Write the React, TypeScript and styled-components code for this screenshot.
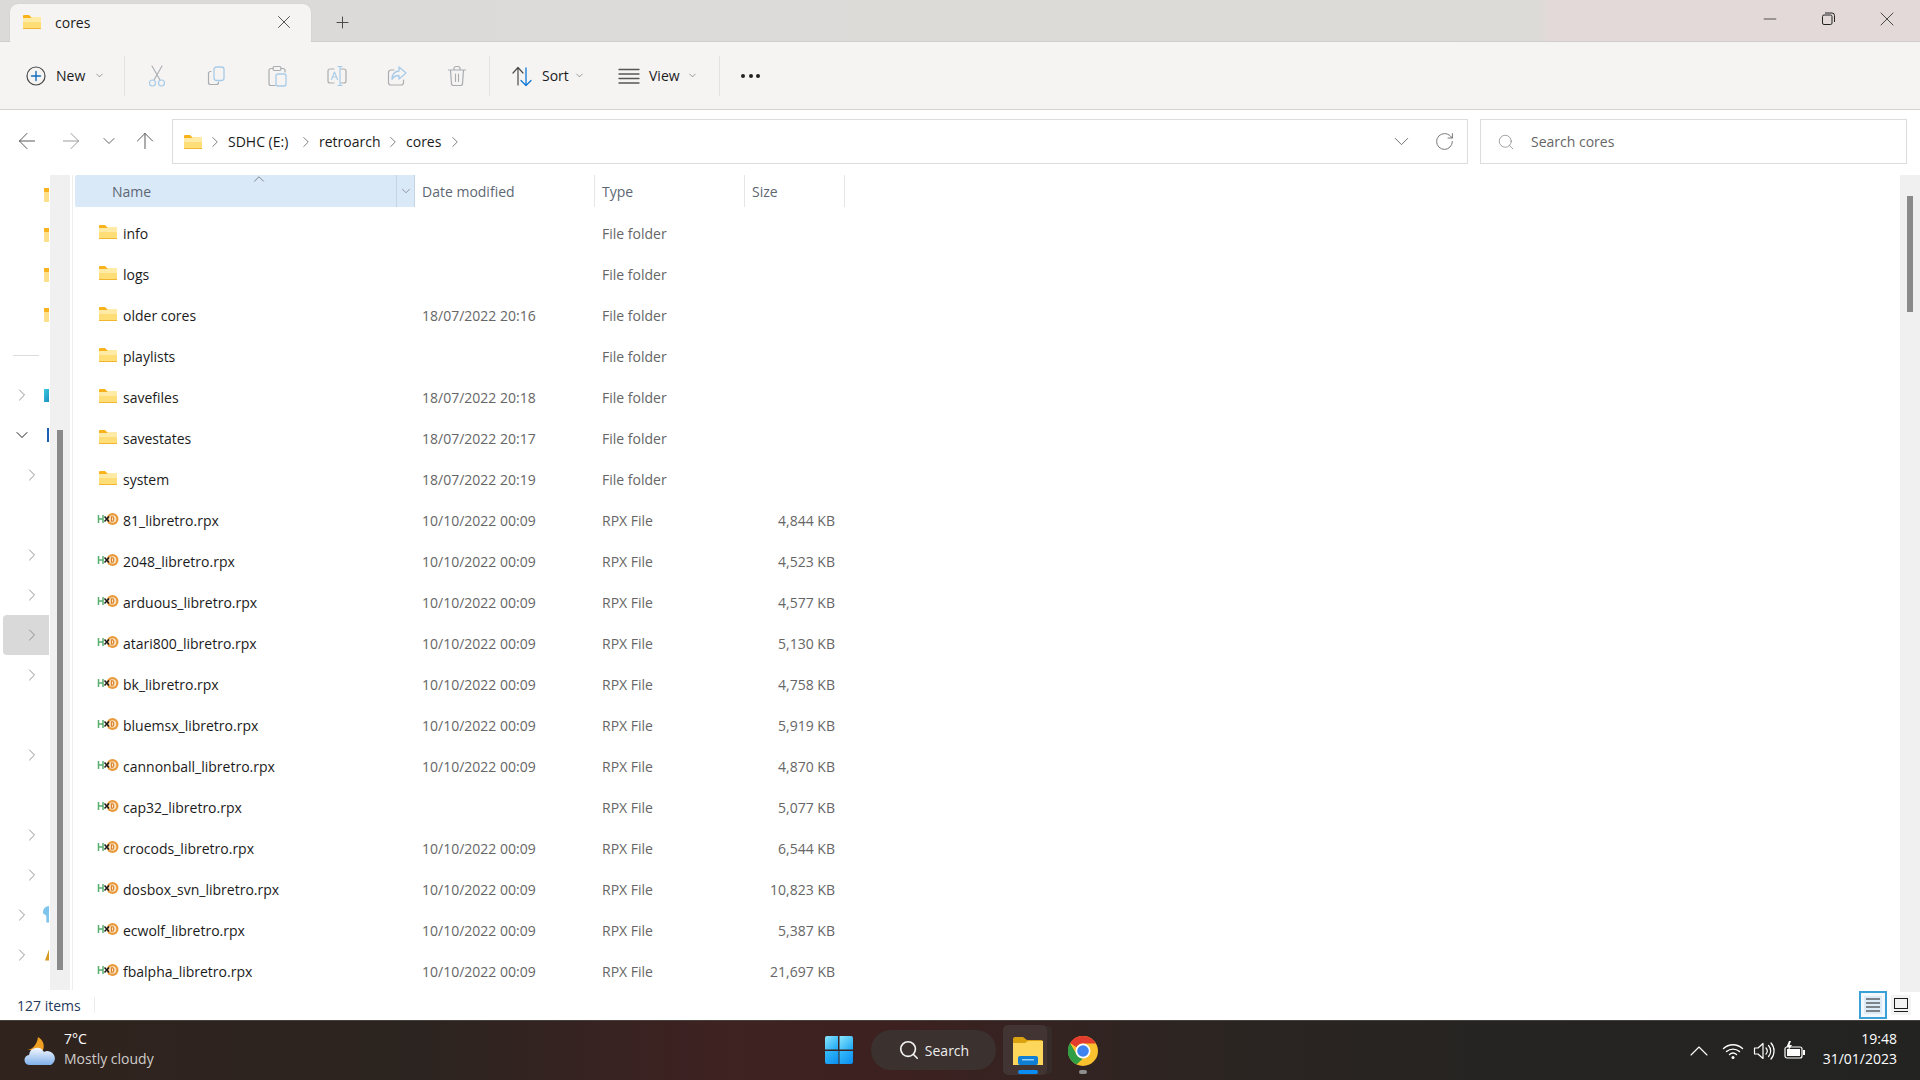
import * as React from "react";
import styled, { createGlobalStyle } from "styled-components";
import {
  ArrowLeft,
  ArrowRight,
  ArrowUp,
  ChevronDown,
  ChevronRight,
  ChevronUp,
  Minus,
  Plus,
  RotateCw,
  Search,
  X,
} from "lucide-react";

const GlobalStyle = createGlobalStyle`
  html, body { margin: 0; padding: 0; background: #fff; }
  * { box-sizing: border-box; }
  body { font-family: "Open Sans", "Noto Sans", sans-serif; font-size: 14px; color: #1b1b1b; }
`;

/* ---------- data ---------- */

type FileRow = { name: string; date?: string; type: string; size?: string };

const files: FileRow[] = [
  { name: "info", type: "File folder" },
  { name: "logs", type: "File folder" },
  { name: "older cores", date: "18/07/2022 20:16", type: "File folder" },
  { name: "playlists", type: "File folder" },
  { name: "savefiles", date: "18/07/2022 20:18", type: "File folder" },
  { name: "savestates", date: "18/07/2022 20:17", type: "File folder" },
  { name: "system", date: "18/07/2022 20:19", type: "File folder" },
  { name: "81_libretro.rpx", date: "10/10/2022 00:09", type: "RPX File", size: "4,844 KB" },
  { name: "2048_libretro.rpx", date: "10/10/2022 00:09", type: "RPX File", size: "4,523 KB" },
  { name: "arduous_libretro.rpx", date: "10/10/2022 00:09", type: "RPX File", size: "4,577 KB" },
  { name: "atari800_libretro.rpx", date: "10/10/2022 00:09", type: "RPX File", size: "5,130 KB" },
  { name: "bk_libretro.rpx", date: "10/10/2022 00:09", type: "RPX File", size: "4,758 KB" },
  { name: "bluemsx_libretro.rpx", date: "10/10/2022 00:09", type: "RPX File", size: "5,919 KB" },
  { name: "cannonball_libretro.rpx", date: "10/10/2022 00:09", type: "RPX File", size: "4,870 KB" },
  { name: "cap32_libretro.rpx", type: "RPX File", size: "5,077 KB" },
  { name: "crocods_libretro.rpx", date: "10/10/2022 00:09", type: "RPX File", size: "6,544 KB" },
  { name: "dosbox_svn_libretro.rpx", date: "10/10/2022 00:09", type: "RPX File", size: "10,823 KB" },
  { name: "ecwolf_libretro.rpx", date: "10/10/2022 00:09", type: "RPX File", size: "5,387 KB" },
  { name: "fbalpha_libretro.rpx", date: "10/10/2022 00:09", type: "RPX File", size: "21,697 KB" },
];

type NavRow = {
  level?: 0 | 1;
  open?: boolean;
  selected?: boolean;
  divider?: boolean;
  sliver?: "folder" | "teal" | "blue" | "pin" | "lock";
};

const navRows: NavRow[] = [
  { sliver: "folder" },
  { sliver: "folder" },
  { sliver: "folder" },
  { sliver: "folder" },
  { divider: true },
  { level: 0, sliver: "teal" },
  { level: 0, open: true, sliver: "blue" },
  { level: 1 },
  {},
  { level: 1 },
  { level: 1 },
  { level: 1, selected: true },
  { level: 1 },
  {},
  { level: 1 },
  {},
  { level: 1 },
  { level: 1 },
  { level: 0, sliver: "pin" },
  { level: 0, sliver: "lock" },
];

/* ---------- drawn icons ---------- */

const FolderIcon = ({ w = 18, h = 14 }: { w?: number; h?: number }) => (
  <svg width={w} height={h} viewBox="0 0 18 14" style={{ display: "block" }}>
    <path d="M0 1a1 1 0 0 1 1-1h5l2 2h10v3H0z" fill="#f8b31c" />
    <path d="M0 3h8l1-1h9v12H0z" fill="#ffdd77" />
    <path d="M0 3h8l1-1h9v5H0z" fill="#ffeaa6" />
    <rect y="13" width="18" height="1" fill="#f2b530" />
  </svg>
);

const HxdIcon = () => (
  <svg width="22" height="16" viewBox="0 0 22 16" style={{ display: "block" }}>
    <circle cx="15.5" cy="8" r="6" fill="#e89a3c" />
    <circle cx="15.5" cy="8" r="3.8" fill="#f9e3c4" />
    <path d="M14.4 5.5v5M14.4 5.5c3.2 0 3.2 5 0 5" stroke="#d9812a" strokeWidth="1.1" fill="none" />
    <path d="M1.5 4v8M6 4v8M1.5 8H6" stroke="#59b06e" strokeWidth="1.5" fill="none" />
    <path d="M7.5 5.5l4.5 5M12 5.5l-4.5 5" stroke="#1c1c1c" strokeWidth="1.5" fill="none" />
  </svg>
);

const Draw = ({ size = 22, children }: { size?: number; children: React.ReactNode }) => (
  <svg
    width={size}
    height={size}
    viewBox="0 0 22 22"
    fill="none"
    strokeLinecap="round"
    strokeLinejoin="round"
    style={{ display: "block" }}
  >
    {children}
  </svg>
);

const GREY = "#a9adb1";
const SOFT = "#a8cbe8";

const NewIcon = () => (
  <Draw>
    <circle cx="11" cy="11" r="9" stroke="#4a4a4a" strokeWidth="1.2" />
    <path d="M11 6.5v9M6.5 11h9" stroke="#0f6cbd" strokeWidth="1.4" />
  </Draw>
);
const CutIcon = () => (
  <Draw>
    <path d="M6 1l8 14M16 1L8 15" stroke={GREY} strokeWidth="1.1" />
    <circle cx="6.5" cy="18" r="3" stroke={SOFT} strokeWidth="1.2" />
    <circle cx="15.5" cy="18" r="3" stroke={SOFT} strokeWidth="1.2" />
  </Draw>
);
const CopyIcon = () => (
  <Draw>
    <path d="M5 6.5H4.5A2 2 0 0 0 2.5 8.5v9a2 2 0 0 0 2 2h6a2 2 0 0 0 2-2V17" stroke={GREY} strokeWidth="1.2" />
    <rect x="8" y="2" width="10" height="13.5" rx="2.5" stroke={SOFT} strokeWidth="1.3" />
  </Draw>
);
const PasteIcon = () => (
  <Draw>
    <path d="M7 3.5H5A2 2 0 0 0 3 5.5v13a2 2 0 0 0 2 2h4M15 3.5h2a2 2 0 0 1 2 2V7" stroke={GREY} strokeWidth="1.2" />
    <rect x="7" y="1.5" width="8" height="4" rx="1.5" stroke={GREY} strokeWidth="1.2" />
    <rect x="10" y="9" width="10" height="12" rx="2" stroke={SOFT} strokeWidth="1.3" />
  </Draw>
);
const RenameIcon = () => (
  <Draw>
    <path d="M8 4H4a2 2 0 0 0-2 2v10a2 2 0 0 0 2 2h4M15 4h3a2 2 0 0 1 2 2v10a2 2 0 0 1-2 2h-3" stroke={GREY} strokeWidth="1.2" />
    <path d="M14 1.5v19M12 1.5h4M12 20.5h4" stroke={SOFT} strokeWidth="1.2" />
    <path d="M5.5 14.5L8.5 7l3 7.5M6.7 12h3.6" stroke={SOFT} strokeWidth="1.1" />
  </Draw>
);
const ShareIcon = () => (
  <Draw>
    <path d="M8 5H5a2.5 2.5 0 0 0-2.5 2.5v10A2.5 2.5 0 0 0 5 20h10a2.5 2.5 0 0 0 2.5-2.5V15" stroke={GREY} strokeWidth="1.2" />
    <path d="M13 2l7 6-7 6v-3.5c-3.5 0-5.5 1-7 4 0-5 2-8 7-8.5z" stroke={SOFT} strokeWidth="1.3" />
  </Draw>
);
const TrashIcon = () => (
  <Draw>
    <path d="M2.5 5h17M8 5V3.5a2 2 0 0 1 2-2h2a2 2 0 0 1 2 2V5M4.5 5l1 14a2 2 0 0 0 2 1.5h7a2 2 0 0 0 2-1.5l1-14" stroke={GREY} strokeWidth="1.2" />
    <path d="M9.5 9v7.5M12.5 9v7.5" stroke={GREY} strokeWidth="1.1" />
  </Draw>
);
const SortIcon = () => (
  <Draw>
    <path d="M7 20V3M2 8l5-5.5L12 8" stroke="#4a4a4a" strokeWidth="1.2" />
    <path d="M15 3v17.5M10 15.5l5 5 5-5" stroke="#0f78d4" strokeWidth="1.3" />
  </Draw>
);
const ViewIcon = () => (
  <Draw>
    <path d="M1 4.5h20M1 9h20M1 13.5h20M1 18h20" stroke="#555" strokeWidth="1.3" />
  </Draw>
);
const RestoreIcon = () => (
  <svg width="13" height="13" viewBox="0 0 13 13" fill="none" style={{ display: "block" }}>
    <rect x="0.5" y="3" width="9.5" height="9.5" rx="1.5" stroke="#222" />
    <path d="M3 1h7a2.5 2.5 0 0 1 2.5 2.5V10" stroke="#222" />
  </svg>
);

const WindowsLogo = () => (
  <svg width="30" height="30" viewBox="0 0 30 30" style={{ display: "block" }}>
    <defs>
      <linearGradient id="winA" x1="0" y1="0" x2="1" y2="1">
        <stop offset="0" stopColor="#8be6fb" />
        <stop offset="1" stopColor="#1aa6f5" />
      </linearGradient>
      <linearGradient id="winB" x1="0" y1="0" x2="1" y2="1">
        <stop offset="0" stopColor="#36bdfa" />
        <stop offset="1" stopColor="#0a8cf0" />
      </linearGradient>
    </defs>
    <path d="M1 3a2 2 0 0 1 2-2h11v13.5H1z" fill="url(#winA)" />
    <path d="M15.5 1H27a2 2 0 0 1 2 2v11.5H15.5z" fill="url(#winA)" />
    <path d="M1 16h13.5v13H3a2 2 0 0 1-2-2z" fill="url(#winB)" />
    <path d="M15.5 16H29v11a2 2 0 0 1-2 2H15.5z" fill="url(#winB)" />
  </svg>
);

const ExplorerIcon = () => (
  <svg width="30" height="28" viewBox="0 0 30 28" style={{ display: "block" }}>
    <path d="M0 2a2 2 0 0 1 2-2h8l4 3h14a2 2 0 0 1 2 2v6H0z" fill="#d9a20e" />
    <path d="M0 6h12l3-2h15v24H0z" fill="#fcd75c" />
    <rect x="5" y="19" width="20" height="9" rx="2" fill="#0f7fd6" />
    <rect x="9" y="22" width="12" height="1.5" fill="#8fd0fb" />
  </svg>
);

const ChromeIcon = () => (
  <svg width="30" height="30" viewBox="0 0 30 30" style={{ display: "block" }}>
    <circle cx="15" cy="15" r="15" fill="#fbc02d" />
    <path d="M15 0a15 15 0 0 1 13 7.5H15a7.5 7.5 0 0 0-6.5 3.75L2 7a15 15 0 0 1 13-7z" fill="#e33b2e" />
    <path d="M2 7l6.5 11.25A7.5 7.5 0 0 0 15 22.5L8.5 28.5A15 15 0 0 1 2 7z" fill="#2f9e44" />
    <circle cx="15" cy="15" r="7.5" fill="#fff" />
    <circle cx="15" cy="15" r="5.8" fill="#3f83ee" />
  </svg>
);

const WeatherIcon = () => (
  <svg width="32" height="30" viewBox="0 0 32 30" style={{ display: "block" }}>
    <path d="M14 1c5 3 7 8 5 13H3c4 0 10-4 11-13z" fill="#f0a020" />
    <defs>
      <linearGradient id="cloud" x1="0" y1="0" x2="0" y2="1">
        <stop offset="0" stopColor="#f4f8ff" />
        <stop offset="1" stopColor="#7fb0ea" />
      </linearGradient>
    </defs>
    <path d="M6 29a5 5 0 0 1-1-10 8 8 0 0 1 15-3 7 7 0 0 1 7 13z" fill="url(#cloud)" />
  </svg>
);

const WifiIcon = () => (
  <Draw>
    <path d="M1.5 8.5a14 14 0 0 1 19 0M4.5 11.5a10 10 0 0 1 13 0M7.5 14.5a5.5 5.5 0 0 1 7 0" stroke="#fff" strokeWidth="1.4" />
    <circle cx="11" cy="17.5" r="1.5" fill="#fff" />
  </Draw>
);
const VolumeIcon = () => (
  <Draw>
    <path d="M1.5 8h3.5l5-4.5v15L5 14H1.5z" stroke="#fff" strokeWidth="1.2" />
    <path d="M13 8a4.5 4.5 0 0 1 0 6M15.5 5.5a8 8 0 0 1 0 11M18 3a12 12 0 0 1 0 16" stroke="#fff" strokeWidth="1.2" />
  </Draw>
);
const BatteryIcon = () => (
  <Draw>
    <rect x="1" y="7" width="17" height="11" rx="2" stroke="#fff" strokeWidth="1.2" />
    <rect x="3" y="9" width="13" height="7" fill="#fff" />
    <rect x="19" y="10" width="2" height="5" fill="#fff" />
    <path d="M5 1L2.5 7H5l-1 4 4-6H5.5L7 1z" fill="#fff" />
  </Draw>
);

/* ---------- app ---------- */

const App: React.FC = () => (
  <Page>
    <GlobalStyle />

    <TitleBar>
      <Tab>
        <FolderIcon />
        <TabLabel>cores</TabLabel>
        <TabClose>
          <X size={22} strokeWidth={0.9} color="#333" />
        </TabClose>
      </Tab>
      <NewTab>
        <Plus size={19} strokeWidth={1.2} color="#444" />
      </NewTab>
      <WindowControls>
        <WindowButton>
          <Minus size={20} strokeWidth={0.9} color="#222" />
        </WindowButton>
        <WindowButton>
          <RestoreIcon />
        </WindowButton>
        <WindowButton>
          <X size={24} strokeWidth={0.8} color="#222" />
        </WindowButton>
      </WindowControls>
    </TitleBar>

    <Toolbar>
      <LabelButton $w={97} $start={25} $pad={0} $chevGap={9}>
        <NewIcon />
        <span>New</span>
        <ChevronDown size={11} strokeWidth={1.4} color="#666" />
      </LabelButton>
      <ToolDivider />
      <IconButton><CutIcon /></IconButton>
      <IconButton><CopyIcon /></IconButton>
      <IconButton><PasteIcon /></IconButton>
      <IconButton><RenameIcon /></IconButton>
      <IconButton><ShareIcon /></IconButton>
      <IconButton><TrashIcon /></IconButton>
      <ToolDivider />
      <LabelButton $w={118} $start={0} $pad={19} $chevGap={5}>
        <SortIcon />
        <span>Sort</span>
        <ChevronDown size={11} strokeWidth={1.4} color="#666" />
      </LabelButton>
      <LabelButton $w={107} $start={0} $pad={8} $chevGap={7}>
        <ViewIcon />
        <span>View</span>
        <ChevronDown size={11} strokeWidth={1.4} color="#666" />
      </LabelButton>
      <ToolDivider />
      <DotsButton>
        <Dot />
        <Dot />
        <Dot />
      </DotsButton>
    </Toolbar>

    <AddressRow>
      <NavButton $w={44}><ArrowLeft size={26} strokeWidth={0.9} color="#555" /></NavButton>
      <NavButton $w={44}><ArrowRight size={26} strokeWidth={0.9} color="#999" /></NavButton>
      <NavButton $w={32}><ChevronDown size={20} strokeWidth={1.1} color="#555" /></NavButton>
      <NavButton $w={40}><ArrowUp size={26} strokeWidth={0.9} color="#555" /></NavButton>
      <AddressBox>
        <FolderIcon />
        <Crumb />
        <CrumbText $w={65}>SDHC (E:)</CrumbText>
        <Crumb />
        <CrumbText $w={61}>retroarch</CrumbText>
        <Crumb />
        <CrumbText $w={36}>cores</CrumbText>
        <Crumb />
        <AddressActions>
          <ChevronDown size={25} strokeWidth={0.8} color="#555" />
          <RotateCw size={21} strokeWidth={1} color="#666" />
        </AddressActions>
      </AddressBox>
      <SearchBox>
        <Search size={18} strokeWidth={0.9} color="#777" />
        <SearchText>Search cores</SearchText>
      </SearchBox>
    </AddressRow>

    <Main>
      <Sidebar>
        {navRows.map((row, i) => (
          <SideRow key={i} $selected={row.selected}>
            {row.divider && <SideDivider />}
            {row.level !== undefined && (
              <SideChevron $level={row.level}>
                {row.open ? (
                  <ChevronDown size={20} strokeWidth={1.2} color="#222" />
                ) : (
                  <ChevronRight size={20} strokeWidth={1.1} color="#888" />
                )}
              </SideChevron>
            )}
            {row.sliver && <Sliver $kind={row.sliver} />}
          </SideRow>
        ))}
      </Sidebar>
      <SideScroll>
        <SideThumb />
      </SideScroll>
      <PaneEdge />

      <Content>
        <Header>
          <HeaderName>
            <SortCaret>
              <ChevronUp size={18} strokeWidth={0.9} color="#555" />
            </SortCaret>
            <span>Name</span>
            <HeaderDrop>
              <ChevronDown size={14} strokeWidth={1.1} color="#667" />
            </HeaderDrop>
          </HeaderName>
          <HeaderCell>Date modified</HeaderCell>
          <HeaderCell>Type</HeaderCell>
          <HeaderCell>Size</HeaderCell>
        </Header>
        <Rows>
          {files.map((f) => {
            const isFolder = f.type === "File folder";
            return (
              <Row key={f.name}>
                <NameCell>
                  <RowIcon $inset={isFolder ? 2 : 0}>{isFolder ? <FolderIcon /> : <HxdIcon />}</RowIcon>
                  <span>{f.name}</span>
                </NameCell>
                <MutedCell>{f.date}</MutedCell>
                <MutedCell>{f.type}</MutedCell>
                <SizeCell>{f.size}</SizeCell>
              </Row>
            );
          })}
        </Rows>
      </Content>

      <RightScroll>
        <RightThumb />
      </RightScroll>
    </Main>

    <StatusBar>
      <StatusText>127 items</StatusText>
      <StatusDivider />
      <ViewToggles>
        <DetailsToggle>
          <DetailsInner>
            <svg width="18" height="16" viewBox="0 0 18 16" style={{ display: "block" }}>
              <path d="M2 2h14M2 6h14M2 10h14M2 14h14" stroke="#1c1c1c" strokeWidth="1" />
            </svg>
          </DetailsInner>
        </DetailsToggle>
        <TileToggle>
          <svg width="16" height="16" viewBox="0 0 16 16" fill="none" style={{ display: "block" }}>
            <rect x="1.5" y="1.5" width="13" height="10" stroke="#1c1c1c" />
            <path d="M1 14.5h14" stroke="#1c1c1c" />
          </svg>
        </TileToggle>
      </ViewToggles>
    </StatusBar>

    <Taskbar>
      <Weather>
        <WeatherIcon />
        <WeatherText>
          <span>7°C</span>
          <WeatherSub>Mostly cloudy</WeatherSub>
        </WeatherText>
      </Weather>
      <TaskCentre>
        <WindowsLogo />
        <TaskSearch>
          <Search size={22} strokeWidth={1.8} color="#f4f4f4" />
          <span>Search</span>
        </TaskSearch>
        <ExplorerSlot>
          <ExplorerIcon />
          <ActiveMark />
        </ExplorerSlot>
        <ChromeSlot>
          <ChromeIcon />
          <OpenMark />
        </ChromeSlot>
      </TaskCentre>
      <Tray>
        <ChevronUp size={32} strokeWidth={0.8} color="#fff" />
        <TrayIcon><WifiIcon /></TrayIcon>
        <TrayIcon><VolumeIcon /></TrayIcon>
        <TrayIcon><BatteryIcon /></TrayIcon>
        <Clock>
          <span>19:48</span>
          <span>31/01/2023</span>
        </Clock>
      </Tray>
    </Taskbar>
  </Page>
);

export default App;

/* ---------- styles ---------- */

const Page = styled.div`
  width: 1920px;
  height: 1080px;
  display: flex;
  flex-direction: column;
  overflow: hidden;
  background: #fff;
`;

const TitleBar = styled.div`
  height: 42px;
  flex: none;
  display: flex;
  align-items: flex-end;
  padding-left: 10px;
  background: linear-gradient(90deg, #dcdad8 0%, #dcdbd8 80%, #e2d9d8 80.7%, #e2d9d8 100%);
  border-bottom: 1px solid #cfcdcb;
`;

const Tab = styled.div`
  width: 301px;
  height: 38px;
  margin-bottom: -1px;
  padding: 0 16px 2px 13px;
  display: flex;
  align-items: center;
  background: #f5f4f3;
  border-radius: 8px 8px 0 0;
  box-shadow: 0 0 1px #bbb;
`;

const TabLabel = styled.span`
  margin-left: 14px;
  flex: 1;
`;

const TabClose = styled.div`
  display: flex;
`;

const NewTab = styled.div`
  width: 34px;
  height: 38px;
  margin-left: 14px;
  display: flex;
  align-items: center;
  justify-content: center;
`;

const WindowControls = styled.div`
  margin-left: auto;
  height: 41px;
  display: flex;
  align-items: center;
  padding: 0 4px 4px 0;
`;

const WindowButton = styled.div`
  width: 58.5px;
  display: flex;
  justify-content: center;
`;

const Toolbar = styled.div`
  height: 68px;
  flex: none;
  display: flex;
  align-items: center;
  background: #f5f4f3;
  border-bottom: 1px solid #d4d3d2;
`;

const LabelButton = styled.div<{ $w: number; $start: number; $pad: number; $chevGap: number }>`
  width: ${(p) => p.$w}px;
  height: 44px;
  margin-left: ${(p) => p.$start}px;
  padding-left: ${(p) => p.$pad}px;
  display: flex;
  align-items: center;
  & > span {
    margin: 0 ${(p) => p.$chevGap}px 0 9px;
  }
`;

const ToolDivider = styled.div`
  width: 1px;
  height: 40px;
  margin: 0 2px;
  background: #e3e2e1;
`;

const IconButton = styled.div`
  width: 60px;
  display: flex;
  justify-content: center;
`;

const DotsButton = styled.div`
  margin-left: 19px;
  display: flex;
  gap: 3.5px;
`;

const Dot = styled.div`
  width: 4px;
  height: 4px;
  border-radius: 50%;
  background: #222;
`;

const AddressRow = styled.div`
  height: 65px;
  flex: none;
  display: flex;
  align-items: flex-start;
  padding: 9px 13px 0 5px;
`;

const NavButton = styled.div<{ $w: number }>`
  width: ${(p) => p.$w}px;
  height: 44px;
  display: flex;
  align-items: center;
  justify-content: center;
`;

const AddressBox = styled.div`
  width: 1296px;
  height: 45px;
  margin-left: 7px;
  padding-left: 11px;
  display: flex;
  align-items: center;
  border: 1px solid #dcdcdc;
`;

const Crumb = styled(ChevronRight).attrs({ size: 18, strokeWidth: 1, color: "#555" })`
  margin: 0 4px;
  flex: none;
`;

const CrumbText = styled.span<{ $w: number }>`
  width: ${(p) => p.$w}px;
  flex: none;
  white-space: nowrap;
`;

const AddressActions = styled.div`
  margin-left: auto;
  padding-right: 12px;
  display: flex;
  align-items: center;
  gap: 20px;
`;

const SearchBox = styled.div`
  width: 427px;
  height: 45px;
  margin-left: 12px;
  padding-left: 16px;
  display: flex;
  align-items: center;
  gap: 16px;
  border: 1px solid #dcdcdc;
`;

const SearchText = styled.span`
  color: #666;
`;

const Main = styled.div`
  flex: 1;
  min-height: 0;
  display: flex;
`;

const Sidebar = styled.div`
  width: 50px;
  flex: none;
  overflow: hidden;
`;

const SideRow = styled.div<{ $selected?: boolean }>`
  width: 46px;
  height: 40px;
  margin-left: 3px;
  display: flex;
  align-items: center;
  border-radius: 4px 0 0 4px;
  background: ${(p) => (p.$selected ? "#d9d9d9" : "transparent")};
`;

const SideDivider = styled.div`
  width: 26px;
  height: 1px;
  margin-left: 10px;
  background: #dcdcdc;
`;

const SideChevron = styled.div<{ $level: 0 | 1 }>`
  margin-left: ${(p) => (p.$level === 0 ? 9 : 19)}px;
  display: flex;
`;

const sliverStyles = {
  folder: "width: 5px; height: 14px; background: linear-gradient(#f8b31c 0 4px, #ffe08a 4px);",
  teal: "width: 5px; height: 13px; background: linear-gradient(120deg, #3ac9e0, #1c8fc0);",
  blue: "width: 2px; height: 14px; background: #1c5fb0;",
  pin: "width: 6px; height: 17px; margin-top: -2px; background: #7fc4ea; border-radius: 6px 0 0 0; clip-path: polygon(0 0, 100% 0, 100% 100%, 55% 100%, 55% 60%, 0 45%);",
  lock: "width: 4px; height: 11px; background: #d89a20; clip-path: polygon(100% 0, 100% 100%, 0 100%);",
};

const Sliver = styled.div<{ $kind: keyof typeof sliverStyles }>`
  margin-left: auto;
  ${(p) => sliverStyles[p.$kind]}
`;

const SideScroll = styled.div`
  width: 20px;
  flex: none;
  padding: 255px 7px 20px;
  background: #f0f0f0;
`;

const SideThumb = styled.div`
  height: 100%;
  background: #8a8a8a;
`;

const PaneEdge = styled.div`
  width: 1px;
  flex: none;
  margin: 0 2px;
  background: #eeeeee;
`;

const Content = styled.div`
  flex: 1;
  min-width: 0;
  display: flex;
  flex-direction: column;
  overflow: hidden;
`;

const columns = "grid-template-columns: 340px 180px 150px 100px;";

const Header = styled.div`
  height: 32px;
  flex: none;
  display: grid;
  ${columns}
  margin-bottom: 6px;
`;

const HeaderCell = styled.div`
  display: flex;
  align-items: center;
  padding-left: 7px;
  color: #5d6773;
  border-right: 1px solid #e6e6e6;
`;

const HeaderName = styled(HeaderCell)`
  position: relative;
  padding-left: 37px;
  justify-content: space-between;
  background: #d9e9f8;
  border-radius: 2px 0 0 2px;
  border-right: 1px solid #c4d4e2;
`;

const SortCaret = styled.div`
  position: absolute;
  left: 175px;
  top: -5px;
  display: flex;
`;

const HeaderDrop = styled.div`
  width: 18px;
  height: 100%;
  display: flex;
  align-items: center;
  justify-content: center;
  border-left: 1px solid #c4d4e2;
`;

const Rows = styled.div`
  flex: 1;
  min-height: 0;
  overflow: hidden;
`;

const Row = styled.div`
  height: 41px;
  display: grid;
  ${columns}
  align-items: center;
`;

const NameCell = styled.div`
  display: flex;
  align-items: center;
  padding-left: 22px;
  color: #1b1b1b;
  white-space: nowrap;
`;

const RowIcon = styled.div<{ $inset: number }>`
  width: 26px;
  flex: none;
  display: flex;
  justify-content: flex-start;
  padding-left: ${(p) => p.$inset}px;
  margin-top: -3px;
`;

const MutedCell = styled.div`
  padding-left: 7px;
  color: #666;
  white-space: nowrap;
`;

const SizeCell = styled.div`
  padding-right: 10px;
  text-align: right;
  color: #666;
  white-space: nowrap;
`;

const RightScroll = styled.div`
  width: 20px;
  flex: none;
  margin-bottom: -2px;
  padding: 21px 7px 0;
  background: #f0f0f0;
`;

const RightThumb = styled.div`
  height: 116px;
  background: #8a8a8a;
`;

const StatusBar = styled.div`
  height: 30px;
  flex: none;
  display: flex;
  align-items: center;
  padding-left: 17px;
`;

const StatusText = styled.span`
  color: #1f3b5c;
`;

const StatusDivider = styled.div`
  width: 1px;
  height: 16px;
  margin-left: 13px;
  background: #ececec;
`;

const ViewToggles = styled.div`
  margin-left: auto;
  display: flex;
  align-items: center;
  gap: 4px;
  padding-right: 9px;
`;

const DetailsToggle = styled.div`
  width: 28px;
  height: 28px;
  padding: 3px;
  border: 2px solid #3aa0d8;
  background: #f3f8fc;
`;

const DetailsInner = styled.div`
  height: 100%;
  display: flex;
  align-items: center;
  justify-content: center;
  background: #dcebf6;
`;

const TileToggle = styled.div`
  width: 20px;
  height: 20px;
  display: flex;
  align-items: center;
  justify-content: center;
  background: #f3f3f3;
`;

const Taskbar = styled.div`
  height: 60px;
  flex: none;
  position: relative;
  display: flex;
  align-items: center;
  color: #fff;
  border-top: 1px solid #46403c;
  background: linear-gradient(90deg, #30231d 0%, #2c2420 22%, #3f2222 38%, #3c2120 47%, #2c2522 62%, #252422 80%, #232322 100%);
`;

const Weather = styled.div`
  display: flex;
  align-items: center;
  gap: 8px;
  padding-left: 24px;
`;

const WeatherText = styled.div`
  display: flex;
  flex-direction: column;
  line-height: 20px;
  margin-top: -3px;
`;

const WeatherSub = styled.span`
  color: #cfcdcb;
`;

const TaskCentre = styled.div`
  position: absolute;
  left: 824px;
  top: 4px;
  height: 50px;
  display: flex;
  align-items: center;
`;

const TaskSearch = styled.div`
  width: 125px;
  height: 40px;
  margin-left: 17px;
  display: flex;
  align-items: center;
  justify-content: center;
  gap: 5px;
  border-radius: 20px;
  background: #3b312f;
  color: #eee;
`;

const ExplorerSlot = styled.div`
  position: relative;
  width: 44px;
  height: 50px;
  margin-left: 7px;
  padding: 12px 0 0 10px;
  border-radius: 5px;
  background: #423432;
  box-shadow: 6px 0 0 -1px #352b29;
`;

const ActiveMark = styled.div`
  position: absolute;
  left: 15px;
  bottom: 1px;
  width: 20px;
  height: 4px;
  border-radius: 2px;
  background: #0a8cf5;
`;

const ChromeSlot = styled.div`
  position: relative;
  width: 30px;
  height: 50px;
  margin-left: 21px;
  padding-top: 11px;
`;

const OpenMark = styled.div`
  position: absolute;
  left: 11px;
  bottom: 1px;
  width: 8px;
  height: 4px;
  border-radius: 2px;
  background: #8e8e8e;
`;

const Tray = styled.div`
  margin-left: auto;
  padding-right: 23px;
  display: flex;
  align-items: center;
`;

const TrayIcon = styled.div`
  width: 31px;
  display: flex;
  justify-content: center;
  &:nth-child(2) { margin-left: 2.5px; }
`;

const Clock = styled.div`
  margin-left: 12px;
  display: flex;
  flex-direction: column;
  align-items: flex-end;
  line-height: 20px;
  margin-top: -3px;
`;
